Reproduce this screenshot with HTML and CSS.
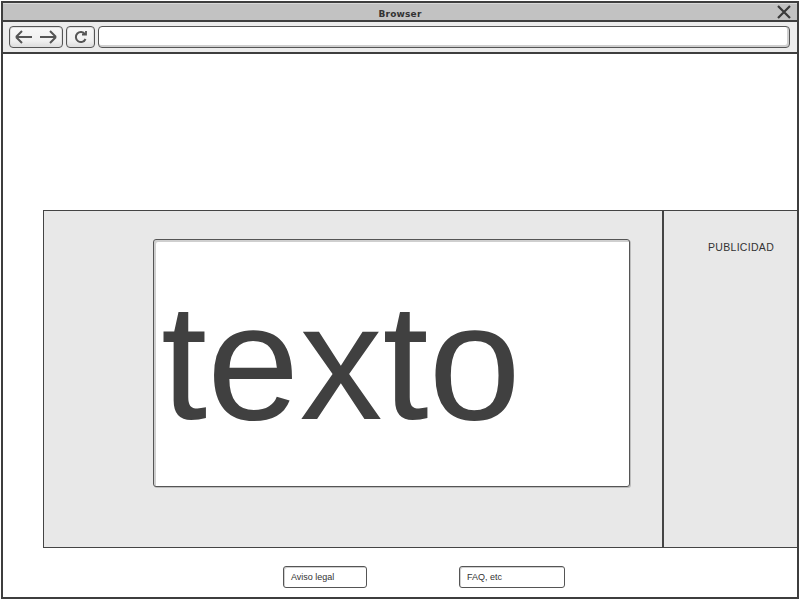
FILE: index.html
```html
<!DOCTYPE html>
<html>
<head>
<meta charset="utf-8">
<link rel="stylesheet" href="styles.css">
</head>
<body>
<div class="frame">
  <div class="titlebar">
    <span class="title">Browser</span>
    <svg class="close" width="14" height="14" viewBox="0 0 14 14"><path d="M1 1 L13 13 M13 1 L1 13" stroke="#3a3a3a" stroke-width="2.2" fill="none"/></svg>
  </div>
  <div class="toolbar">
    <div class="btn nav">
      <svg width="20" height="14" viewBox="0 0 20 14"><path d="M2 7 H18 M2 7 L8 1 M2 7 L8 13" stroke="#555" stroke-width="2" fill="none"/></svg>
      <svg width="20" height="14" viewBox="0 0 20 14"><path d="M2 7 H18 M18 7 L12 1 M18 7 L12 13" stroke="#555" stroke-width="2" fill="none"/></svg>
    </div>
    <div class="btn refresh">
      <svg width="14" height="14" viewBox="0 0 14 14"><path d="M11 4.2 A5 5 0 1 0 11.5 9" stroke="#555" stroke-width="2" fill="none"/><path d="M8 4.5 L12 4.5 L12 1" stroke="#555" stroke-width="1.8" fill="none"/></svg>
    </div>
    <div class="url"></div>
  </div>
  <div class="content">
    <div class="main">
      <div class="center">
        <div class="textbox"><span class="big">texto</span></div>
      </div>
      <div class="side"><span class="ad">PUBLICIDAD</span></div>
    </div>
    <div class="footer">
      <div class="fbtn legal">Aviso legal</div>
      <div class="fbtn faq">FAQ, etc</div>
    </div>
  </div>
</div>
</body>
</html>
```
FILE: styles.css
```css
html, body {
  margin: 0;
  padding: 0;
  background: #ffffff;
}
body {
  font-family: "Liberation Sans", Arial, sans-serif;
  width: 800px;
  height: 601px;
}
.frame {
  margin: 1px;
  width: 798px;
  height: 598px;
  box-sizing: border-box;
  border: 2px solid #3e3e3e;
  display: flex;
  flex-direction: column;
  background: #fff;
}
.titlebar {
  height: 19px;
  box-sizing: border-box;
  padding-top: 3px;
  border-top: 1px solid #d8d8d8;
  background: #c2c2c2;
  border-bottom: 2px solid #3e3e3e;
  display: flex;
  align-items: center;
  justify-content: center;
  position: relative;
}
.title {
  font-family: "DejaVu Sans", sans-serif;
  font-weight: bold;
  font-size: 9px;
  color: #333;
  letter-spacing: 0.2px;
}
.close {
  position: absolute;
  right: 6px;
  top: 1px;
}
.toolbar {
  height: 30px;
  background: #ececec;
  border-bottom: 2px solid #3e3e3e;
  display: flex;
  align-items: center;
  padding: 0 6px;
  gap: 3px;
}
.btn, .url {
  height: 22px;
  box-sizing: border-box;
  border: 1.5px solid #555;
  border-radius: 4px;
  background: linear-gradient(#f8f8f8, #f0f0f0 70%, #dcdcdc);
  box-shadow: inset 0 0 0 1px #e0e0e0;
  display: flex;
  align-items: center;
  justify-content: center;
}
.nav {
  width: 54px;
  gap: 4px;
}
.refresh {
  width: 29px;
}
.url {
  flex: 1;
  background: #fff;
  box-shadow: inset -1px -1px 0 1px #cfcfcf;
  margin-right: 1px;
}
.content {
  flex: 1;
  display: flex;
  flex-direction: column;
  padding-top: 156px;
}
.main {
  margin-left: 40px;
  height: 338px;
  box-sizing: border-box;
  border: 1px solid #444;
  border-right: none;
  background: #e8e8e8;
  display: flex;
}
.center {
  width: 620px;
  border-right: 2px solid #444;
  padding: 28px 0 0 109px;
  box-sizing: border-box;
}
.textbox {
  width: 477px;
  height: 248px;
  box-sizing: border-box;
  border: 1.5px solid #555;
  border-radius: 3px;
  background: #fff;
  box-shadow: inset 2px 2px 0 #cfcfcf, 1px 1px 0 #bdbdbd;
  overflow: hidden;
  padding-left: 7px;
}
.big {
  display: block;
  font-size: 166px;
  line-height: 166px;
  margin-top: 39px;
  color: #404040;
}
.side {
  flex: 1;
  padding: 26px 0 0 44px;
}
.ad {
  font-size: 10.5px;
  color: #333;
  letter-spacing: 0.3px;
}
.footer {
  display: flex;
  padding-top: 18px;
}
.fbtn {
  height: 22px;
  box-sizing: border-box;
  border: 1.5px solid #555;
  border-radius: 3px;
  box-shadow: inset 1px 1px 0 #d0d0d0;
  background: #fff;
  font-size: 9px;
  color: #333;
  display: flex;
  align-items: center;
  padding-left: 7px;
}
.legal {
  margin-left: 280px;
  width: 84px;
}
.faq {
  margin-left: 92px;
  width: 106px;
}
```
